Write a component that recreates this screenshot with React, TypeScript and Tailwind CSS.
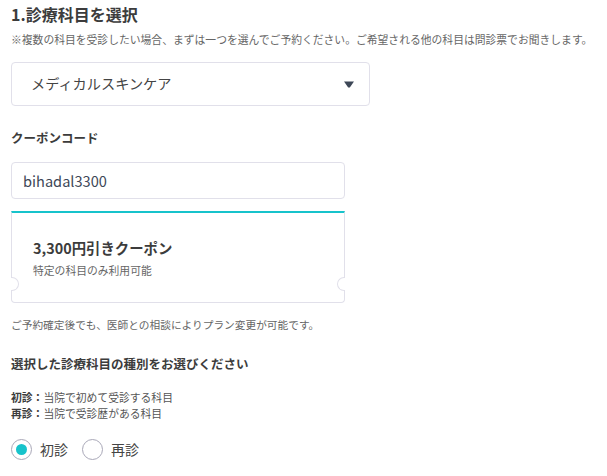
// App.tsx

const font = {
  fontFamily: '"Noto Sans CJK JP", "Noto Sans", sans-serif',
};

function Radio({ label, checked }: { label: string; checked?: boolean }) {
  return (
    <label className="flex items-center gap-[8px] cursor-pointer">
      <span className="w-[21px] h-[21px] rounded-full border border-[#a9a8b8] bg-white flex items-center justify-center">
        {checked && <span className="w-[11px] h-[11px] rounded-full bg-[#17c3cb]" />}
      </span>
      <span className="text-[14px] leading-[22px] text-[#444]">{label}</span>
    </label>
  );
}

export default function App() {
  return (
    <div className="bg-white min-h-[476px] px-[11px] pt-[3px] text-[#3c3c3c]" style={font}>
      {/* ================= 診療科目 ================= */}
      <h2 className="text-[16px] leading-[22px] font-bold">1.診療科目を選択</h2>
      <p className="mt-[6px] text-[10.8px] leading-[16px] text-[#666] whitespace-nowrap">
        ※複数の科目を受診したい場合、まずは一つを選んでご予約ください。ご希望される他の科目は問診票でお聞きします。
      </p>

      <div className="mt-[15px] w-[359px] h-[44px] rounded-[4px] border border-[#e1e0ea] flex items-center justify-between pl-[19px] pr-[15px]">
        <span className="text-[14.2px] text-[#444]">メディカルスキンケア</span>
        <svg width="10" height="7" viewBox="0 0 10 7">
          <path d="M0 0.5 L10 0.5 L5.8 6.5 L4.2 6.5 Z" fill="#3d4757" />
        </svg>
      </div>

      {/* ================= クーポン ================= */}
      <h3 className="mt-[23px] text-[12.5px] leading-[18px] font-bold">クーポンコード</h3>
      <div className="mt-[15px] w-[334px] h-[37px] rounded-[4px] border border-[#e1e0ea] flex items-center pl-[11px]">
        <span className="text-[14.6px] text-[#3d4757]">bihadal3300</span>
      </div>

      <div className="relative mt-[12px] w-[334px] border border-[#e1e0ea] border-t-2 border-t-[#17c3cb] rounded-b-[4px] pl-[21px] pt-[25px] pb-[24px]">
        <p className="text-[14.4px] leading-[20px] font-bold text-[#3c3c3c]">3,300円引きクーポン</p>
        <p className="mt-[4px] text-[10.8px] leading-[16px] text-[#666]">特定の科目のみ利用可能</p>
        {/* ticket notches */}
        <span className="absolute left-[-1px] top-[64px] w-[8px] h-[14px] rounded-r-full border border-l-0 border-[#e1e0ea] bg-white" />
        <span className="absolute right-[-1px] top-[64px] w-[8px] h-[14px] rounded-l-full border border-r-0 border-[#e1e0ea] bg-white" />
      </div>

      <p className="mt-[14px] text-[10.7px] leading-[16px] text-[#666]">
        ご予約確定後でも、医師との相談によりプラン変更が可能です。
      </p>

      {/* ================= 種別 ================= */}
      <h3 className="mt-[22px] text-[12.5px] leading-[18px] font-bold">選択した診療科目の種別をお選びください</h3>
      <div className="mt-[16px] text-[10.8px] leading-[16px] text-[#555]">
        <p>
          <span className="font-bold text-[#3c3c3c]">初診：</span>当院で初めて受診する科目
        </p>
        <p>
          <span className="font-bold text-[#3c3c3c]">再診：</span>当院で受診歴がある科目
        </p>
      </div>

      <div className="mt-[17px] flex items-center gap-[14px]">
        <Radio label="初診" checked />
        <Radio label="再診" />
      </div>
    </div>
  );
}
